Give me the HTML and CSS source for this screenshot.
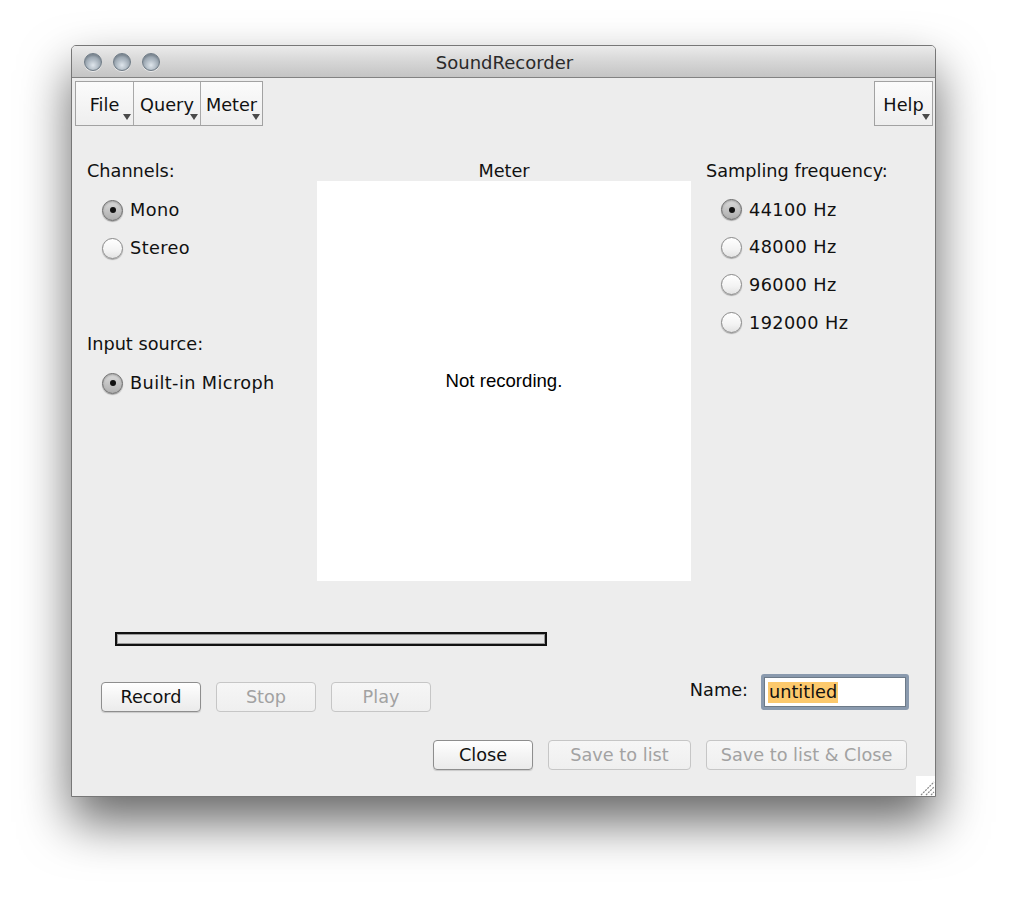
FILE: index.html
```html
<!DOCTYPE html>
<html>
<head>
<meta charset="utf-8">
<title>SoundRecorder</title>
<link rel="stylesheet" href="styles.css">
</head>
<body>
<div class="window">
  <div class="titlebar">
    <div class="lights">
      <span class="light"></span><span class="light"></span><span class="light"></span>
    </div>
    <div class="title">SoundRecorder</div>
  </div>
  <div class="content">
    <div class="toolbar">
      <div class="menugroup">
        <div class="menu menu-file">File</div>
        <div class="menu menu-query">Query</div>
        <div class="menu menu-meter">Meter</div>
      </div>
      <div class="menugroup">
        <div class="menu menu-help">Help</div>
      </div>
    </div>

    <div class="main">
      <div class="col col-left">
        <div class="label">Channels:</div>
        <div class="radios">
          <div class="radio-row"><span class="radio checked"></span><span class="rtext">Mono</span></div>
          <div class="radio-row"><span class="radio"></span><span class="rtext">Stereo</span></div>
        </div>
        <div class="label label-input">Input source:</div>
        <div class="radios">
          <div class="radio-row"><span class="radio checked"></span><span class="rtext clip">Built-in Microph</span></div>
        </div>
      </div>
      <div class="col col-mid">
        <div class="label label-meter">Meter</div>
        <div class="meter-box">Not recording.</div>
      </div>
      <div class="col col-right">
        <div class="label">Sampling frequency:</div>
        <div class="radios">
          <div class="radio-row freq"><span class="radio checked"></span><span class="rtext">44100 Hz</span></div>
          <div class="radio-row freq"><span class="radio"></span><span class="rtext">48000 Hz</span></div>
          <div class="radio-row freq"><span class="radio"></span><span class="rtext">96000 Hz</span></div>
          <div class="radio-row freq"><span class="radio"></span><span class="rtext">192000 Hz</span></div>
        </div>
      </div>
    </div>

    <div class="progress-row"><div class="progress"></div></div>

    <div class="action-row">
      <div class="btns">
        <div class="btn">Record</div>
        <div class="btn disabled">Stop</div>
        <div class="btn disabled">Play</div>
      </div>
      <div class="name-group">
        <span class="name-label">Name:</span>
        <div class="field"><span class="sel">untitled</span></div>
      </div>
    </div>

    <div class="bottom-row">
      <div class="btn">Close</div>
      <div class="btn disabled btn-save">Save to list</div>
      <div class="btn disabled btn-saveclose">Save to list &amp; Close</div>
    </div>

    <div class="grip">
      <svg width="19" height="20" viewBox="0 0 19 20">
        <path d="M5 19 L18 6 M10 19 L18 11 M15 19 L18 16" stroke="#8a8a8a" stroke-width="1.2" stroke-dasharray="2 1" fill="none"/>
      </svg>
    </div>
  </div>
</div>
</body>
</html>
```

FILE: styles.css
```css
html, body {
  margin: 0;
  padding: 0;
  background: #ffffff;
}

body {
  width: 1024px;
  height: 898px;
  overflow: hidden;
  font-family: "DejaVu Sans", "Liberation Sans", sans-serif;
  font-size: 17.7px;
  color: #111;
}

.window {
  box-sizing: border-box;
  margin: 45px 0 0 71px;
  width: 865px;
  height: 752px;
  border: 1px solid #777777;
  border-radius: 5px 5px 0 0;
  box-shadow: 0 25px 50px rgba(0, 0, 0, 0.6);
  background: #ededed;
  display: flex;
  flex-direction: column;
}

.titlebar {
  position: relative;
  height: 31px;
  flex: none;
  border-bottom: 1px solid #828282;
  border-radius: 4px 4px 0 0;
  background: linear-gradient(#ebebeb, #d6d6d6 50%, #c4c4c4);
  display: flex;
  align-items: center;
  justify-content: center;
}

.lights {
  position: absolute;
  left: 12px;
  top: 7px;
  display: flex;
  gap: 11px;
}

.light {
  width: 16px;
  height: 16px;
  border-radius: 50%;
  border: 1px solid #6f7b86;
  background: radial-gradient(circle at 50% 70%, #dfe6ec 0%, #aab5bf 45%, #8894a0 100%);
  box-shadow: 0 1px 0 rgba(255, 255, 255, 0.6), inset 0 2px 2px rgba(70, 80, 90, 0.35);
}

.title {
  font-size: 18px;
  color: #2a2a2a;
  margin-left: 2px;
  margin-top: 2px;
}

.content {
  position: relative;
  flex: 1;
  display: flex;
  flex-direction: column;
}

.toolbar {
  margin-top: 3px;
  padding: 0 2px 0 3px;
  display: flex;
  justify-content: space-between;
}

.menugroup {
  display: flex;
  border: 1px solid #a2a2a2;
  height: 43px;
  background: linear-gradient(#fbfbfb, #eeeeee);
}

.menu {
  position: relative;
  display: flex;
  align-items: center;
  justify-content: center;
  box-sizing: border-box;
  height: 43px;
  border-left: 1px solid #a9a9a9;
  padding-top: 3px;
}

.menu:first-child {
  border-left: none;
}

.menu::after {
  content: "";
  position: absolute;
  right: 2px;
  bottom: 5px;
  border-left: 4.5px solid transparent;
  border-right: 4.5px solid transparent;
  border-top: 6px solid #4a4a4a;
}

.menu-file { width: 57px; }
.menu-query { width: 67px; }
.menu-meter { width: 62px; }
.menu-help { width: 57px; }

.main {
  margin-top: 34px;
  display: flex;
  align-items: flex-start;
}

.label {
  line-height: 20px;
  padding-top: 1px;
  white-space: nowrap;
}

.col-left {
  box-sizing: border-box;
  width: 245px;
  padding-left: 15px;
  overflow: hidden;
}

.col-mid {
  width: 374px;
  display: flex;
  flex-direction: column;
  align-items: center;
}

.label-meter {
  line-height: 20px;
}

.meter-box {
  width: 374px;
  height: 400px;
  background: #ffffff;
  display: flex;
  align-items: center;
  justify-content: center;
  font-family: "Liberation Sans", Arial, sans-serif;
  font-size: 18.6px;
  color: #000;
}

.col-right {
  box-sizing: border-box;
  padding-left: 15px;
  flex: 1;
}

.radios {
  margin-top: 10px;
  padding-left: 15px;
}

.label-input {
  margin-top: 66px;
}

.radio-row {
  height: 38px;
  display: flex;
  align-items: center;
  white-space: nowrap;
}

.radio-row.freq {
  height: 37.6px;
}

.radio {
  box-sizing: border-box;
  width: 21px;
  height: 21px;
  border-radius: 50%;
  border: 1px solid #8a8a8a;
  background: linear-gradient(#ffffff, #f3f3f3 60%, #e3e3e3);
  box-shadow: 0 1px 1px rgba(0, 0, 0, 0.3);
  margin-right: 7px;
  display: flex;
  align-items: center;
  justify-content: center;
  flex: none;
}

.radio.checked {
  border-color: #6a6a6a;
  background: linear-gradient(#dcdcdc, #c4c4c4 50%, #aeaeae);
  box-shadow: 0 1px 1px rgba(0, 0, 0, 0.3), inset 0 1px 2px rgba(0, 0, 0, 0.25);
}

.radio.checked::after {
  content: "";
  width: 6px;
  height: 6px;
  border-radius: 50%;
  background: #111;
}

.rtext {
  line-height: 20px;
  letter-spacing: 0.4px;
}

.progress-row {
  margin-top: 51px;
  padding-left: 43px;
  display: flex;
}

.progress {
  box-sizing: border-box;
  width: 432px;
  height: 14px;
  border: 2px solid #111;
  background: #e6e6e6;
  box-shadow: inset 0 0 0 1px #9a9a9a;
}

.action-row {
  margin-top: 28px;
  padding: 0 26px 0 29px;
  display: flex;
  justify-content: space-between;
  align-items: flex-start;
}

.btns {
  margin-top: 8px;
  display: flex;
  gap: 15px;
}

.btn {
  box-sizing: border-box;
  width: 100px;
  height: 30px;
  border: 1px solid #8e8e8e;
  border-radius: 4px;
  background: linear-gradient(#ffffff, #f4f4f4 50%, #ebebeb);
  box-shadow: 0 1px 1px rgba(0, 0, 0, 0.15);
  display: flex;
  align-items: center;
  justify-content: center;
  white-space: nowrap;
  color: #111;
}

.btn.disabled {
  border-color: #c6c6c6;
  color: #a2a2a2;
  background: linear-gradient(#f6f6f6, #efefef);
  box-shadow: none;
}

.btn-save { width: 143px; }
.btn-saveclose { width: 201px; }

.name-group {
  display: flex;
  align-items: center;
  gap: 13px;
}

.name-label {
  margin-top: -4px;
}

.field {
  box-sizing: border-box;
  width: 148px;
  height: 36px;
  border: 3px solid #8a9aae;
  border-radius: 3px;
  box-shadow: inset 0 0 0 1px #6d7a88;
  background: #ffffff;
  padding: 0 0 0 4px;
  display: flex;
  align-items: center;
}

.sel {
  background: #fcc96d;
  line-height: 21px;
  padding: 0 1px;
  color: #111;
}

.bottom-row {
  margin-top: 28px;
  padding-right: 28px;
  display: flex;
  justify-content: flex-end;
  gap: 15px;
}

.grip {
  position: absolute;
  right: 0;
  bottom: 0;
  width: 19px;
  height: 20px;
  background: #ffffff;
}

.grip svg {
  display: block;
}
```
